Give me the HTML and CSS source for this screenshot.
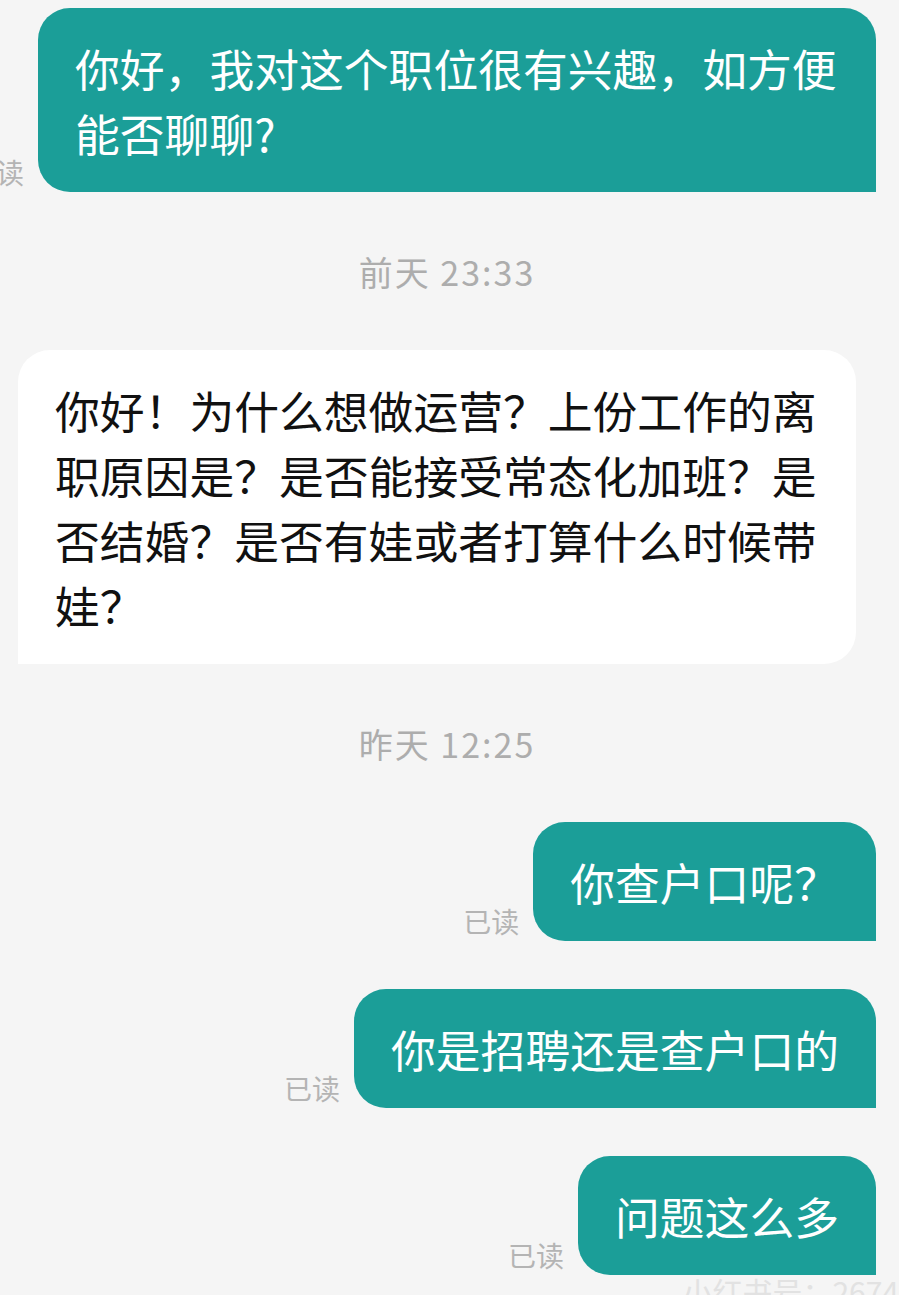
FILE: index.html
```html
<!DOCTYPE html>
<html>
	<head>
		<meta charset="UTF-8">
		<title>聊天</title>
		<link rel="stylesheet" href="styles.css">
	</head>
	<body>
		<main class="chat">
			<div class="row out">
				<span class="read">已读</span>
				<p class="bubble">你好，我对这个职位很有兴趣，如方便能否聊聊?</p>
			</div>

			<p class="time">前天 23:33</p>

			<div class="row in">
				<p class="bubble">你好！为什么想做运营？上份工作的离职原因是？是否能接受常态化加班？是否结婚？是否有娃或者打算什么时候带娃？</p>
			</div>

			<p class="time">昨天 12:25</p>

			<div class="row out">
				<span class="read">已读</span>
				<p class="bubble">你查户口呢？</p>
			</div>
			<div class="row out">
				<span class="read">已读</span>
				<p class="bubble">你是招聘还是查户口的</p>
			</div>
			<div class="row out">
				<span class="read">已读</span>
				<p class="bubble">问题这么多</p>
			</div>
		</main>

		<div class="mark">小红书号：2674</div>
	</body>
</html>
```

FILE: styles.css
```css
html, body {
    margin: 0; padding: 0;
    height: 100%;
    overflow: hidden;
}

body {
    font-family: "Noto Sans CJK SC", "Noto Sans", sans-serif;
    background-color: #f5f5f5;
    position: relative;
}

.chat {
    display: flex; flex-direction: column;
    padding: 8px 23px 0 18px;
}

.row {
    display: flex;
    align-items: flex-end;
    gap: 14px;
}

.row.out {
    justify-content: flex-end;
}

.row.out + .row.out {
    margin-top: 48px;
}

.bubble {
    flex-shrink: 0;
    max-width: 838px;
    box-sizing: border-box;
    margin: 0;
    padding: 27px 37px;
    font-size: 44.8px;
    line-height: 65px;
    border-radius: 32px;
}

.out .bubble {
    background-color: #1b9e98;
    color: #ffffff;
    border-bottom-right-radius: 0;
}

.in .bubble {
    width: 838px;
    background-color: #ffffff;
    color: #111111;
    border-bottom-left-radius: 0;
}

.read {
    flex-shrink: 0;
    font-size: 28px;
    line-height: 28px;
    color: #b4b4b4;
    margin-bottom: 6px;
    white-space: nowrap;
}

.time {
    margin: 60px 0 58px;
    text-align: center;
    font-size: 34px;
    line-height: 40px;
    letter-spacing: 2px;
    color: #adadad;
}

.mark {
    position: absolute; right: 0; bottom: -18px;
    font-size: 30px;
    color: #e2e2e2;
    white-space: nowrap;
}
```
